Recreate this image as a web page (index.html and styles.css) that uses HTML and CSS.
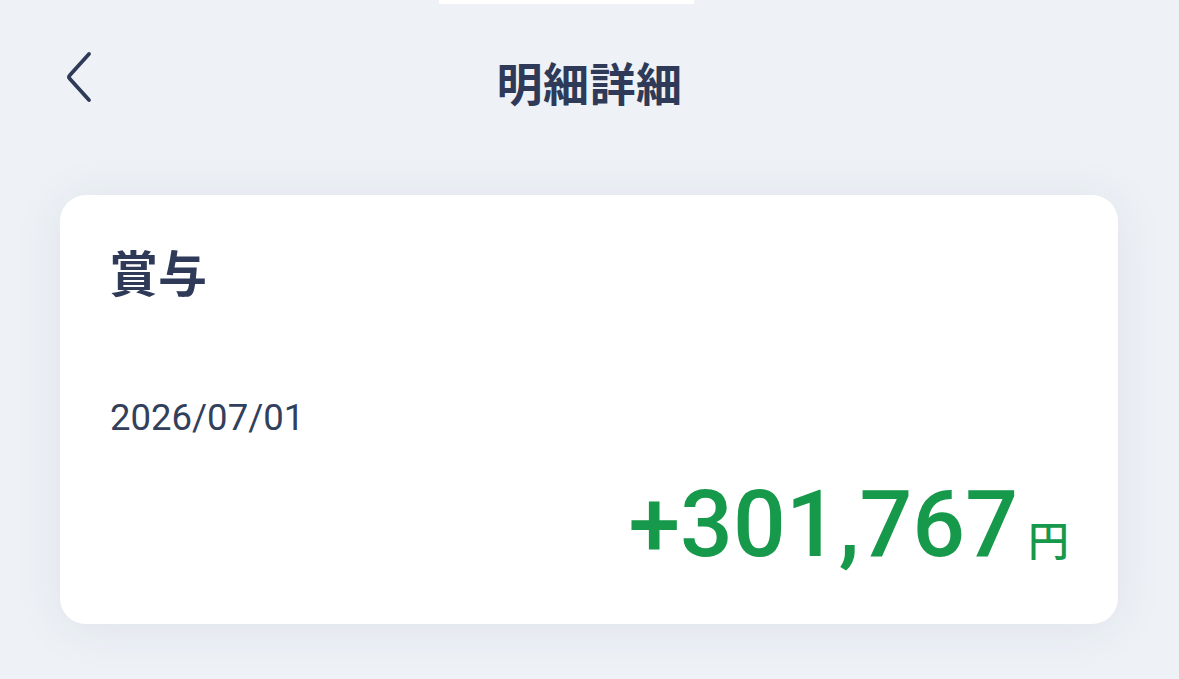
FILE: index.html
```html
<!DOCTYPE html>
<html lang="ja">
<head>
    <meta charset="UTF-8">
    <meta name="viewport" content="width=device-width, initial-scale=1.0">
    <title>明細詳細</title>
    <link rel="stylesheet" href="styles.css">
</head>
<body>
    <div class="top-strip"></div>

    <header class="nav">
        <a class="back" href="#" aria-label="戻る">
            <svg width="30" height="54" viewBox="0 0 30 54">
                <path d="M26 4 L7 25 Q5 27 7 29 L26 50" fill="none" stroke="#2e3a57" stroke-width="3.8" stroke-linecap="round" stroke-linejoin="round"/>
            </svg>
        </a>
        <h1 class="nav-title">明細詳細</h1>
    </header>

    <main class="content">
        <section class="card">
            <h2 class="card-title">賞与</h2>
            <p class="card-date">2026/07/01</p>
            <p class="amount">
                <span class="amount-value">+301,767</span><span class="amount-unit">円</span>
            </p>
        </section>
    </main>
</body>
</html>
```

FILE: styles.css
```css
html {
    background-color: #eef2f7;
}

body {
    margin: 0;
    min-height: 100vh;
    background-color: #eef2f7;
    color: #2e3a57;
    font-family: "Noto Sans CJK JP", "Noto Sans", sans-serif;
}

.top-strip {
    width: 255px;
    height: 4px;
    margin-left: 439px;
    background: #fff;
}

.nav {
    height: 150px;
    display: flex;
    align-items: center;
    justify-content: center;
    position: relative;
}

.back {
    position: absolute;
    left: 63px;
    top: 46px;
    display: block;
    line-height: 0;
}

.nav-title {
    margin: 0;
    font-size: 46px;
    font-weight: 700;
    line-height: 1;
    letter-spacing: 0.5px;
    padding-top: 4px;
}

.content {
    padding: 41px 61px 55px 60px;
}

.card {
    height: 429px;
    box-sizing: border-box;
    padding: 51px 49px 0 49px;
    background: #fff;
    border-radius: 26px;
    box-shadow: 0 4px 50px rgba(40, 50, 80, 0.08);
}

.card-title {
    margin: 0;
    font-size: 49px;
    font-weight: 700;
    line-height: 49px;
}

.card-date {
    margin: 103px 0 0 1px;
    font-family: Roboto, "Liberation Sans", sans-serif;
    font-size: 36.5px;
    line-height: 40px;
    color: #33405c;
}

.amount {
    margin: 40px 0 0;
    display: flex;
    justify-content: flex-end;
    align-items: baseline;
    color: #16994a;
    line-height: 1;
}

.amount-value {
    font-family: Roboto, "Liberation Sans", sans-serif;
    font-size: 93px;
    font-weight: 500;
}

.amount-unit {
    margin-left: 10px;
    font-size: 41px;
    font-weight: 500;
}
```
